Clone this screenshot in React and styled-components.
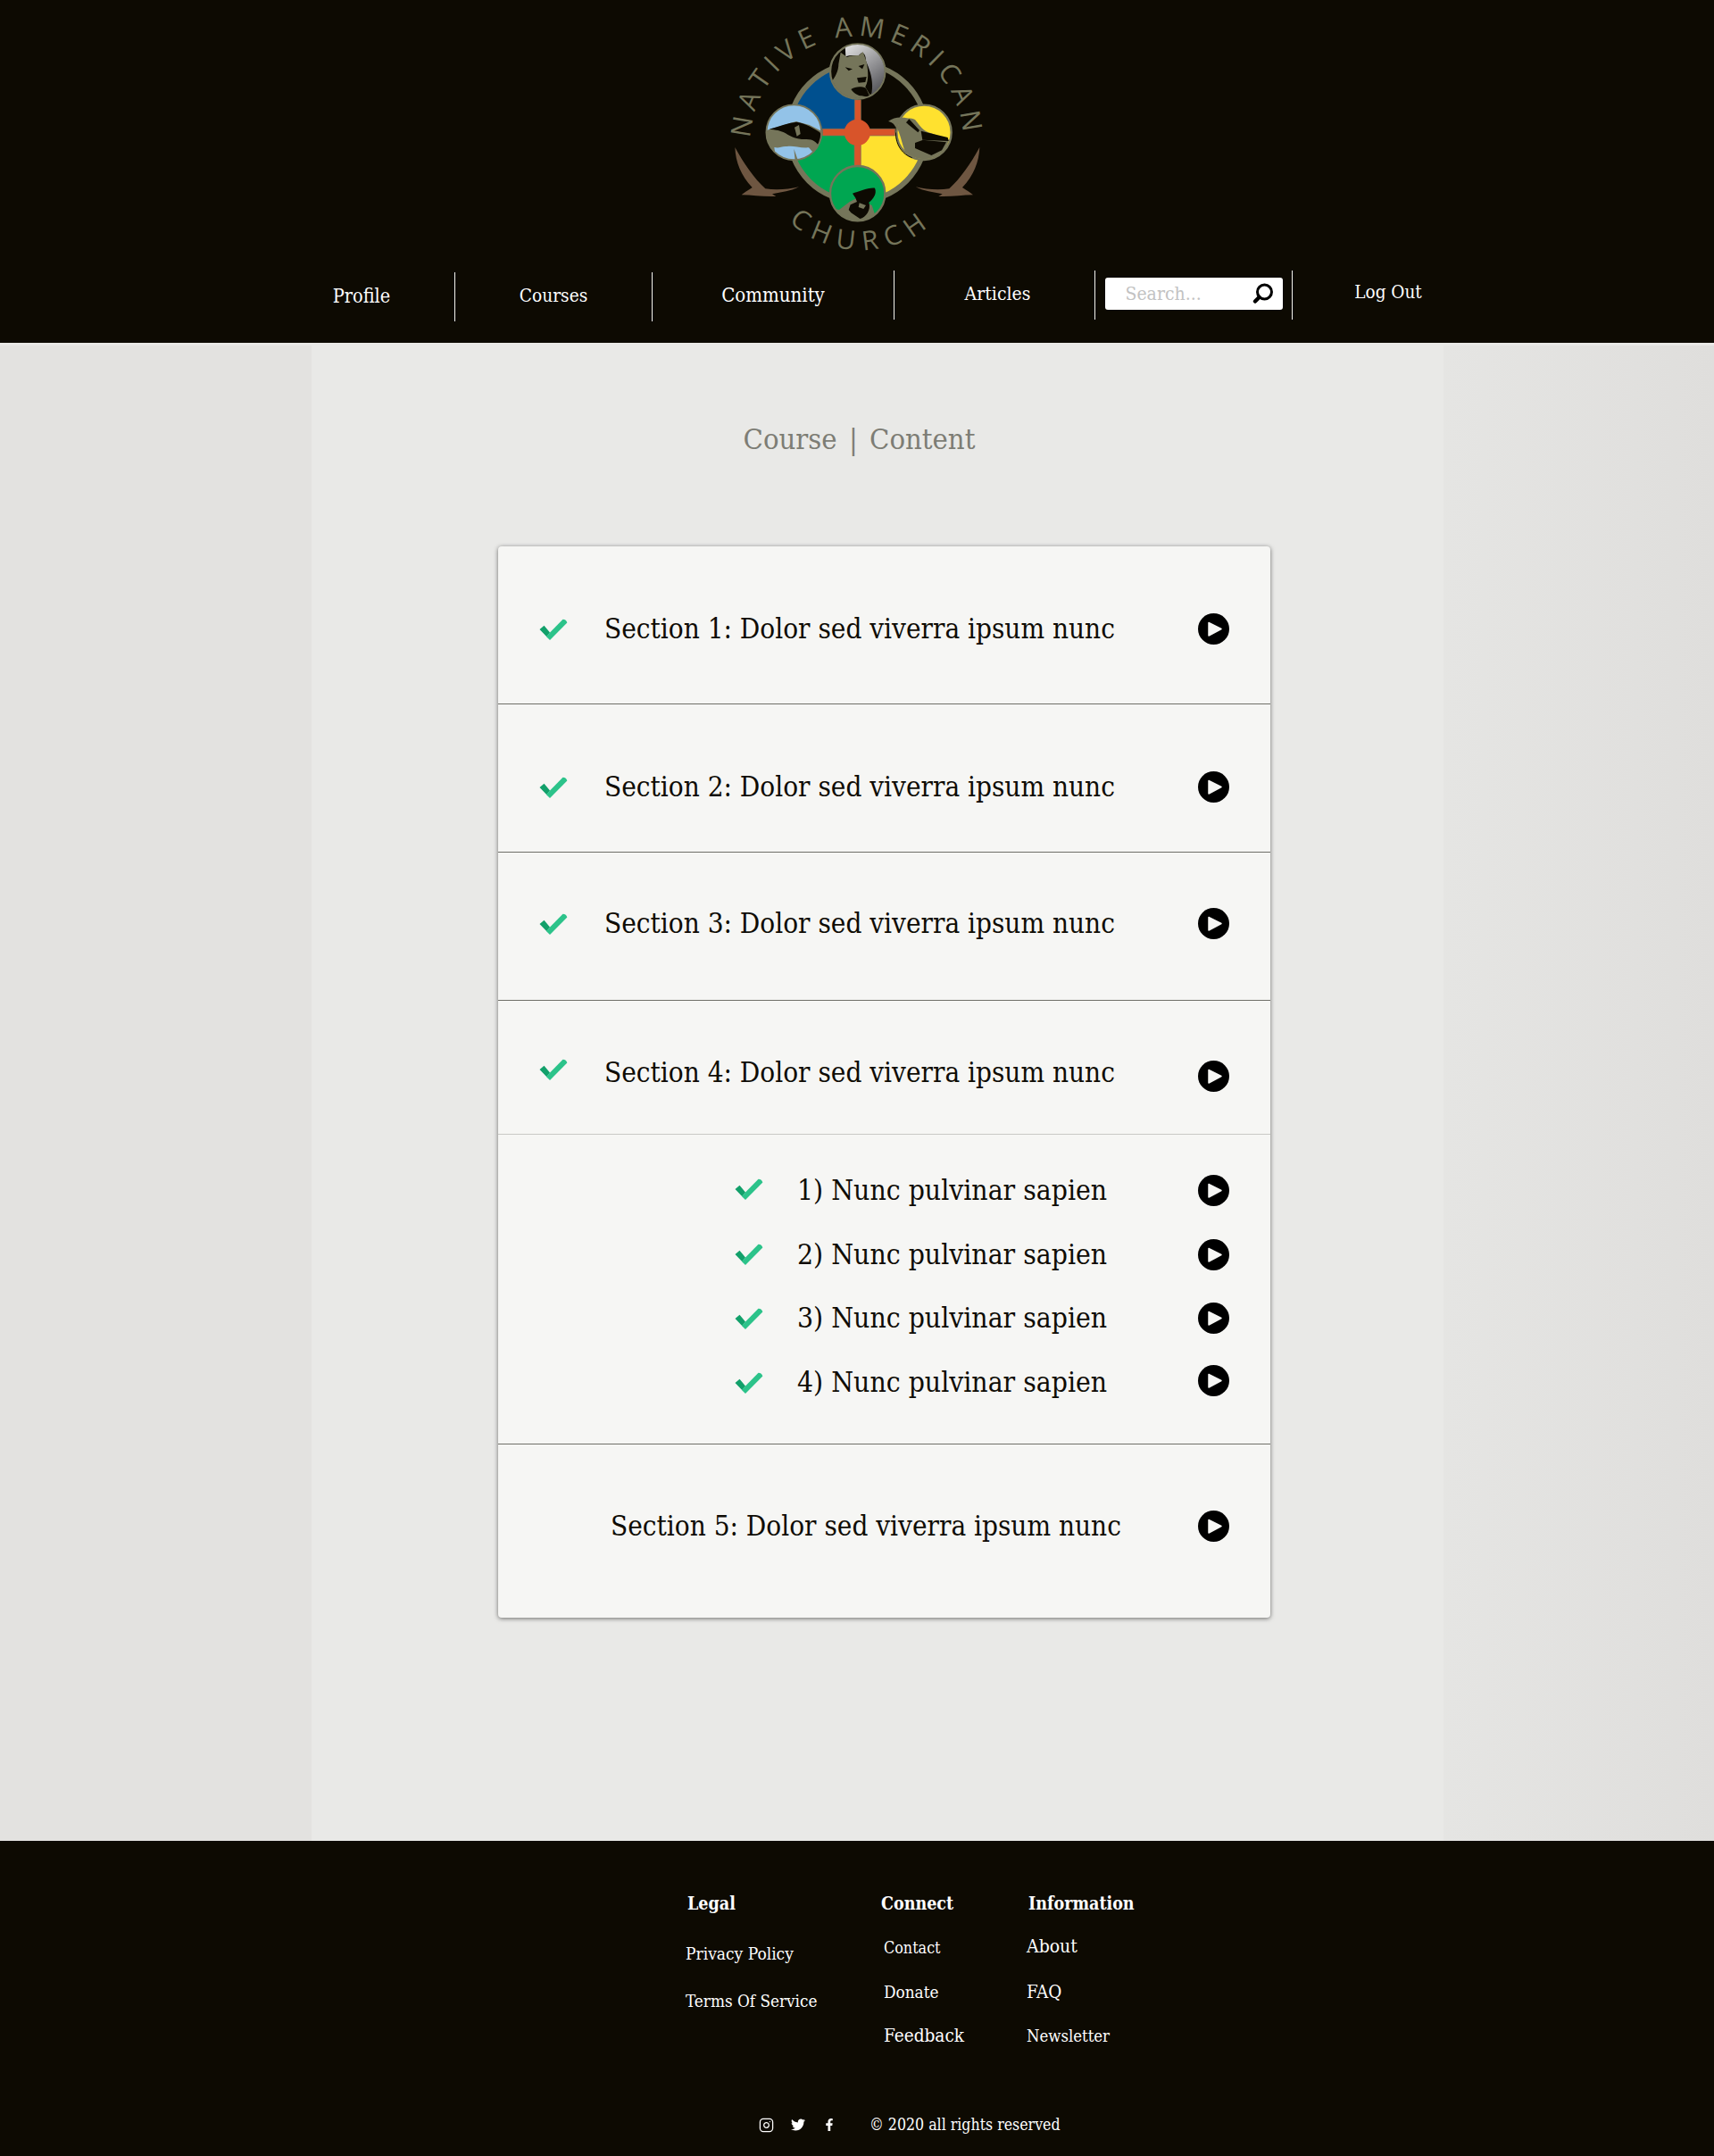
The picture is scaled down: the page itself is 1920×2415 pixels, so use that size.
import React from "react";
import styled, { createGlobalStyle } from "styled-components";
import { FaTwitter, FaFacebookF } from "react-icons/fa";
import { Instagram } from "lucide-react";

const GlobalStyle = createGlobalStyle`
  html, body {
    margin: 0;
    padding: 0;
    background: #e3e2e0;
  }
  body {
    font-family: "DejaVu Serif", "Liberation Serif", serif;
    font-stretch: condensed;
  }
`;

const Page = styled.div`
  width: 1920px;
  height: 2415px;
  display: flex;
  flex-direction: column;
  overflow: hidden;
`;

const Header = styled.header`
  height: 384px;
  background: #0d0a02;
  display: flex;
  flex-direction: column;
`;

const LogoWrap = styled.div`
  height: 300px;
  padding-left: 780px;
  font-stretch: normal;
`;

const Nav = styled.nav`
  display: flex;
  align-items: flex-start;
  padding-left: 301px;
`;

const NavCell = styled.div`
  box-sizing: border-box;
  width: ${(p) => p.$width}px;
  height: 55px;
  margin-top: ${(p) => p.$top}px;
  border-right: ${(p) => (p.$last ? "none" : "1px solid #f4f4f0")};
  display: flex;
  align-items: center;
  justify-content: center;
  padding: ${(p) => p.$pad || "0 0 3px 0"};
  color: #fff;
  font-size: ${(p) => p.$size || 21}px;
`;

const SearchBox = styled.div`
  box-sizing: border-box;
  width: 199px;
  height: 36px;
  background: #fff;
  border-radius: 3px;
  display: flex;
  align-items: center;
  justify-content: space-between;
  padding: 0 9px 0 23px;
  color: #c2c2c2;
  font-size: 21px;
`;

const Main = styled.main`
  box-sizing: border-box;
  height: 1678px;
  display: flex;
  border-top: 3px solid #e9e9e7;
  background: linear-gradient(90deg, #e3e2e0 0, #e3e2e0 18%, #e6e6e4 82%, #dfdedc 100%);
  padding-left: 349px;
`;

const Panel = styled.div`
  box-sizing: border-box;
  width: 1268px;
  background: #e9e9e7;
  padding: 84px 0 0 209px;
`;

const PageTitle = styled.h1`
  width: 809px;
  margin: 0;
  height: 57px;
  line-height: 42px;
  text-align: center;
  font-size: 32.5px;
  word-spacing: 4px;
  font-weight: 400;
  color: #7d7d75;
  padding-bottom: 84px;
`;

const Card = styled.div`
  width: 865px;
  background: #f6f6f4;
  border-radius: 4px;
  box-shadow: 0 1px 5px rgba(0, 0, 0, 0.55);
`;

const SectionRow = styled.div`
  box-sizing: border-box;
  height: ${(p) => p.$height}px;
  padding: ${(p) => p.$top}px 46px 0 44px;
  display: flex;
  align-items: flex-start;
  border-bottom: ${(p) => (p.$rule ? `1px solid ${p.$rule}` : "none")};
`;

const CheckSlot = styled.div`
  width: 75px;
  flex-shrink: 0;
  height: 35px;
  display: flex;
  align-items: center;
  margin-top: ${(p) => p.$nudge || 0}px;
`;

const RowLabel = styled.div`
  flex: 1;
  height: 35px;
  line-height: 35px;
  font-size: 31.2px;
  color: #0f0c05;
  white-space: nowrap;
  padding-left: ${(p) => p.$indent || 0}px;
`;

const PlaySlot = styled.div`
  width: 35px;
  height: 35px;
  margin-top: ${(p) => p.$nudge || 0}px;
`;

const SubList = styled.div`
  height: 347px;
  box-sizing: border-box;
  padding-top: 27px;
  border-bottom: 1px solid #6f6f68;
`;

const SubRow = styled.div`
  box-sizing: border-box;
  height: 71.5px;
  padding: 18px 46px 0 263px;
  display: flex;
  align-items: flex-start;
`;

const SubCheck = styled(CheckSlot)`
  width: 72px;
`;

const SubLabel = styled(RowLabel)`
  font-size: 31.6px;
`;

const Footer = styled.footer`
  flex: 1;
  background: #0d0a02;
  color: #fff;
  padding: 56px 0 0 766px;
  box-sizing: border-box;
`;

const FooterColumns = styled.div`
  display: flex;
  height: 250px;
`;

const FooterColumn = styled.div`
  width: ${(p) => p.$width}px;
  display: flex;
  flex-direction: column;
`;

const ColumnHead = styled.h3`
  margin: 0 0 0 ${(p) => p.$indent || 0}px;
  height: 28px;
  line-height: 30px;
  font-size: 19.5px;
  font-weight: 700;
  color: #fff;
`;

const FooterLink = styled.a`
  display: block;
  color: #fff;
  margin-left: ${(p) => p.$indent || 0}px;
  margin-top: ${(p) => p.$top}px;
  height: 24px;
  line-height: 24px;
  white-space: nowrap;
  font-size: ${(p) => p.$size || 19}px;
`;

const BottomBar = styled.div`
  display: flex;
  align-items: center;
  height: 24px;
  margin-left: 84px;
  font-size: 17.6px;
`;

const SocialIcon = styled.span`
  width: 36px;
  height: 18px;
  display: flex;
  align-items: center;
  color: #fff;
`;

const Copyright = styled.span`
  margin-left: 16px;
`;

const InkPath = ({ d }) => <path d={d} fill="#0d0a02" />;

function Logo() {
  const olive = "#75755a";
  const brown = "#6e5641";
  const wing =
    "M130 495 C132 545 150 590 188 630 C172 640 160 648 152 655 C190 655 225 662 268 660 L255 652 C285 645 320 642 345 628 C310 636 270 640 232 634 C195 600 160 550 130 495Z";
  return (
    <svg width="360" height="300" viewBox="0 0 1080 900">
      <defs>
        <path id="arcTop" d="M 182 480 A 358 358 0 0 1 898 480" />
        <path id="arcBottom" d="M 195 480 A 360 360 0 0 0 915 480" />
        <clipPath id="clipTop"><circle cx="542" cy="240" r="90" /></clipPath>
        <clipPath id="clipLeft"><circle cx="328" cy="445" r="90" /></clipPath>
        <clipPath id="clipRight"><circle cx="765" cy="445" r="90" /></clipPath>
        <clipPath id="clipBottom"><circle cx="542" cy="650" r="90" /></clipPath>
        <clipPath id="clipRing"><circle cx="542" cy="445" r="226" /></clipPath>
        <linearGradient id="moon" x1="0" y1="0" x2="0.6" y2="1">
          <stop offset="0" stopColor="#e4e4e4" />
          <stop offset="1" stopColor="#55555a" />
        </linearGradient>
      </defs>

      <text fontFamily="'Open Sans', sans-serif" fontSize="92" fill={olive} letterSpacing="20" textAnchor="middle">
        <textPath href="#arcTop" startOffset="50%">NATIVE AMERICAN</textPath>
      </text>
      <text fontFamily="'Open Sans', sans-serif" fontSize="90" fill={olive} letterSpacing="28" textAnchor="middle">
        <textPath href="#arcBottom" startOffset="50%">CHURCH</textPath>
      </text>

      <path fill={brown} d={wing} />
      <path fill={brown} d={wing} transform="translate(1082 0) scale(-1 1)" />

      <g clipPath="url(#clipRing)">
        <rect x="316" y="219" width="226" height="226" fill="#00508f" />
        <rect x="542" y="445" width="226" height="226" fill="#ffe12f" />
        <rect x="316" y="445" width="226" height="226" fill="#00a651" />
      </g>
      <circle cx="542" cy="445" r="231" fill="none" stroke={olive} strokeWidth="18" />
      <path d="M424 433H532V335H553V433H668V456H553V560H531V456H424Z" fill="#d8542a" stroke={olive} strokeWidth="2" />
      <circle cx="541" cy="445" r="44" fill="#d8542a" />

      {/* wolf */}
      <circle cx="542" cy="240" r="92" fill="#0d0a02" stroke={olive} strokeWidth="7" />
      <g clipPath="url(#clipTop)">
        <path fill="url(#moon)" d="M500 150H640V330H585C600 280 585 240 570 205 C570 190 565 175 555 178 L545 187 C530 185 512 185 502 190Z" />
        <path fill={olive} d="M485 176 L507 192 C520 186 535 186 547 186 L560 174 L572 208 C578 240 580 270 568 292 L590 330 L480 335 L440 290 C460 270 478 245 478 215 Z" />
        <InkPath d="M500 226 L525 232 L512 238Z" />
        <InkPath d="M545 222 L565 216 L558 232Z" />
        <InkPath d="M520 300 C535 290 555 290 570 296 L585 328 L555 322 C545 322 530 315 520 300Z" />
        <InkPath d="M540 262 L572 258 L568 276 L545 278Z" />
      </g>

      {/* buffalo */}
      <circle cx="328" cy="445" r="92" fill={olive} stroke={olive} strokeWidth="7" />
      <g clipPath="url(#clipLeft)">
        <path fill="#93c3e8" d="M230 350H430V445 L380 420 L335 408 L245 435 L230 440Z" />
        <path fill="#93c3e8" d="M262 495 C280 500 285 490 305 492 C325 488 345 498 378 496 L392 512 L380 540 H268Z" />
        <path fill={olive} d="M328 500 L342 540 L332 540Z" />
        <InkPath d="M245 434 C280 424 310 412 338 410 C365 415 395 430 415 445 C425 460 428 480 412 490 C402 478 395 468 370 468 C345 470 320 462 300 448 C285 438 265 436 245 434Z" />
        <path fill={olive} d="M330 428 L345 420 L350 450 L338 458Z" />
      </g>

      {/* eagle */}
      <circle cx="765" cy="445" r="92" fill="#ffe12f" stroke={olive} strokeWidth="7" />
      <g clipPath="url(#clipRight)">
        <path fill={olive} d="M668 420 C680 400 710 392 735 402 C750 420 760 440 790 448 L850 470 L825 530 L760 540 L710 525 C690 495 690 450 668 420Z" />
        <InkPath d="M715 400 L750 438 L745 445 L705 412Z" />
        <InkPath d="M755 440 L845 462 L848 474 L762 470 L735 480 L735 498 L790 522 L825 505 L840 478 L760 470Z" />
      </g>
      <path d="M645 408 C665 392 690 392 712 398 C695 402 680 408 670 428 C665 415 655 410 645 408Z" fill={olive} />
      <path d="M670 445 C670 490 695 520 725 530" fill="none" stroke="#0d0a02" strokeWidth="3" />

      {/* bear */}
      <circle cx="542" cy="650" r="92" fill="#00a651" stroke={olive} strokeWidth="7" />
      <g clipPath="url(#clipBottom)">
        <path fill={olive} d="M455 700 L480 705 L515 678 L540 665 L590 690 L600 720 L575 750 H455Z" />
        <InkPath d="M525 650 C545 645 575 630 600 632 C608 650 595 668 580 680 C588 705 570 730 550 735 L520 715 L512 705 L518 688 L540 678 L535 665Z" />
        <path fill={olive} d="M548 682 L570 690 L562 702 L545 696Z" />
      </g>
    </svg>
  );
}

function SearchIcon() {
  return (
    <svg width="26" height="26" viewBox="0 0 26 26">
      <circle cx="14.5" cy="11" r="8" fill="none" stroke="#000" strokeWidth="3" />
      <path d="M8.5 17 L4 21.5" stroke="#000" strokeWidth="4.5" strokeLinecap="round" />
    </svg>
  );
}

function Check() {
  return (
    <svg width="35" height="26" viewBox="0 0 35 26">
      <path d="M2.5 13 L7.5 8.7 L14 16.5 L10.5 21 L14 25 Z" fill="#12a06a" />
      <path d="M28.5 1.7 Q32.5 1.8 33.3 5.5 L14 25 L10 21 L14 16.5 Z" fill="#2cc38a" />
    </svg>
  );
}

function Play() {
  return (
    <svg width="35" height="35" viewBox="0 0 35 35">
      <circle cx="17.5" cy="17.5" r="17.5" fill="#000" />
      <path d="M12 10.5 L26 17.5 L12 25 Z" fill="#f6f6f4" stroke="#f6f6f4" strokeWidth="1.5" strokeLinejoin="round" />
    </svg>
  );
}

const sections = [
  { label: "Section 1: Dolor sed viverra ipsum nunc", height: 177, top: 75, rule: "#6f6f68" },
  { label: "Section 2: Dolor sed viverra ipsum nunc", height: 166, top: 75, rule: "#6f6f68" },
  { label: "Section 3: Dolor sed viverra ipsum nunc", height: 166, top: 62, rule: "#6f6f68" },
  { label: "Section 4: Dolor sed viverra ipsum nunc", height: 150, top: 63, rule: "#c9c9c5", checkNudge: -4, playNudge: 4 },
];

const lessons = [
  { label: "1) Nunc pulvinar sapien", check: -2, play: 0 },
  { label: "2) Nunc pulvinar sapien", check: 0, play: 0 },
  { label: "3) Nunc pulvinar sapien", check: 0, play: 0 },
  { label: "4) Nunc pulvinar sapien", check: 1, play: -2 },
];

export default function App() {
  return (
    <Page>
      <GlobalStyle />
      <Header>
        <LogoWrap>
          <Logo />
        </LogoWrap>
        <Nav>
          <NavCell $width={209} $top={5} $size={21.5}>Profile</NavCell>
          <NavCell $width={221} $top={5} $size={20.7}>Courses</NavCell>
          <NavCell $width={271} $top={3} $size={22} $pad="0 0 1px 0">Community</NavCell>
          <NavCell $width={225} $top={3} $pad="0 0 3px 7px">Articles</NavCell>
          <NavCell $width={221} $top={3} $pad="0 10px 3px 10px">
            <SearchBox>
              Search...
              <SearchIcon />
            </SearchBox>
          </NavCell>
          <NavCell $width={214} $top={3} $size={20.5} $last $pad="0 0 7px 0">Log Out</NavCell>
        </Nav>
      </Header>

      <Main>
        <Panel>
          <PageTitle>Course | Content</PageTitle>
          <Card>
            {sections.map((s) => (
              <SectionRow key={s.label} $height={s.height} $top={s.top} $rule={s.rule}>
                <CheckSlot $nudge={s.checkNudge}><Check /></CheckSlot>
                <RowLabel>{s.label}</RowLabel>
                <PlaySlot $nudge={s.playNudge}><Play /></PlaySlot>
              </SectionRow>
            ))}
            <SubList>
              {lessons.map((l) => (
                <SubRow key={l.label}>
                  <SubCheck $nudge={l.check}><Check /></SubCheck>
                  <SubLabel>{l.label}</SubLabel>
                  <PlaySlot $nudge={l.play}><Play /></PlaySlot>
                </SubRow>
              ))}
            </SubList>
            <SectionRow $height={194} $top={74}>
              <RowLabel $indent={82}>Section 5: Dolor sed viverra ipsum nunc</RowLabel>
              <PlaySlot><Play /></PlaySlot>
            </SectionRow>
          </Card>
        </Panel>
      </Main>

      <Footer>
        <FooterColumns>
          <FooterColumn $width={219}>
            <ColumnHead $indent={4}>Legal</ColumnHead>
            <FooterLink $indent={2} $top={30}>Privacy Policy</FooterLink>
            <FooterLink $indent={2} $top={30} $size={18.8}>Terms Of Service</FooterLink>
          </FooterColumn>
          <FooterColumn $width={167}>
            <ColumnHead $indent={2}>Connect</ColumnHead>
            <FooterLink $indent={5} $top={24} $size={17.8}>Contact</FooterLink>
            <FooterLink $indent={5} $top={26} $size={18.8}>Donate</FooterLink>
            <FooterLink $indent={5} $top={24} $size={20.6}>Feedback</FooterLink>
          </FooterColumn>
          <FooterColumn $width={200}>
            <ColumnHead $indent={0}>Information</ColumnHead>
            <FooterLink $indent={-2} $top={22} $size={21}>About</FooterLink>
            <FooterLink $indent={-2} $top={27} $size={20.4}>FAQ</FooterLink>
            <FooterLink $indent={-2} $top={26} $size={18.4}>Newsletter</FooterLink>
          </FooterColumn>
        </FooterColumns>
        <BottomBar>
          <SocialIcon><Instagram size={17} strokeWidth={1.8} /></SocialIcon>
          <SocialIcon><FaTwitter size={16} /></SocialIcon>
          <SocialIcon><FaFacebookF size={14} /></SocialIcon>
          <Copyright>© 2020 all rights reserved</Copyright>
        </BottomBar>
      </Footer>
    </Page>
  );
}
